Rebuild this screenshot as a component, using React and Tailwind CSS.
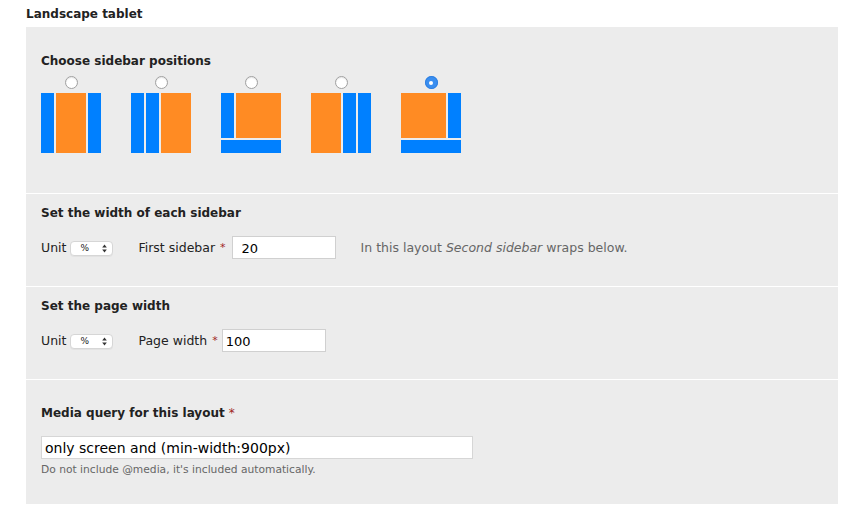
const BLUE = 'bg-[#0080ff]'
const ORANGE = 'bg-[#ff8b23]'

function Radio({ checked }) {
  if (checked) {
    return (
      <span className="flex h-[13px] w-[13px] items-center justify-center rounded-full bg-[#3a8ef0] shadow-[inset_0_0_0_1px_#2f7fe0]">
        <span className="h-[4px] w-[4px] rounded-full bg-white" />
      </span>
    )
  }
  return (
    <span className="block h-[13px] w-[13px] rounded-full border border-[#a0a0a0] bg-white shadow-[inset_0_1px_1px_rgba(0,0,0,0.1)]" />
  )
}

function LayoutIcon({ kind }) {
  if (kind === 'both') {
    return (
      <div className="flex h-[60px] w-[60px] gap-[2px]">
        <div className={`w-[13px] ${BLUE}`} />
        <div className={`flex-1 ${ORANGE}`} />
        <div className={`w-[13px] ${BLUE}`} />
      </div>
    )
  }
  if (kind === 'left') {
    return (
      <div className="flex h-[60px] w-[60px] gap-[2px]">
        <div className={`w-[13px] ${BLUE}`} />
        <div className={`w-[13px] ${BLUE}`} />
        <div className={`flex-1 ${ORANGE}`} />
      </div>
    )
  }
  if (kind === 'right') {
    return (
      <div className="flex h-[60px] w-[60px] gap-[2px]">
        <div className={`flex-1 ${ORANGE}`} />
        <div className={`w-[13px] ${BLUE}`} />
        <div className={`w-[13px] ${BLUE}`} />
      </div>
    )
  }
  if (kind === 'leftwrap') {
    return (
      <div className="flex h-[60px] w-[60px] flex-col gap-[2px]">
        <div className="flex flex-1 gap-[2px]">
          <div className={`w-[13px] ${BLUE}`} />
          <div className={`flex-1 ${ORANGE}`} />
        </div>
        <div className={`h-[13px] ${BLUE}`} />
      </div>
    )
  }
  return (
    <div className="flex h-[60px] w-[60px] flex-col gap-[2px]">
      <div className="flex flex-1 gap-[2px]">
        <div className={`flex-1 ${ORANGE}`} />
        <div className={`w-[13px] ${BLUE}`} />
      </div>
      <div className={`h-[13px] ${BLUE}`} />
    </div>
  )
}

function UnitSelect() {
  return (
    <div className="flex h-[15px] w-[43px] items-center justify-between rounded-[4px] border border-[#d6d6d6] bg-white pl-[9px] pr-[5px] shadow-[0_1px_0_rgba(0,0,0,0.04)]">
      <span className="text-[9px] leading-none text-[#222]">%</span>
      <svg width="5" height="9" viewBox="0 0 5 9">
        <path d="M2.5 0.5 L4.8 3.6 L0.2 3.6 Z" fill="#333" />
        <path d="M2.5 8.5 L4.8 5.4 L0.2 5.4 Z" fill="#333" />
      </svg>
    </div>
  )
}

function Required() {
  return <span className="ml-[5px] pt-[1px] text-[11px] text-[#a02424]">*</span>
}

export default function App() {
  const options = ['both', 'left', 'leftwrap', 'right', 'rightwrap']

  return (
    <div
      className="h-[517px] w-[866px] overflow-hidden bg-white text-[#222]"
      style={{ fontFamily: '"DejaVu Sans", Verdana, sans-serif' }}
    >
      <div className="h-[27px] pl-[26px] pt-[6px] text-[12px] font-bold leading-[16px]">
        Landscape tablet
      </div>

      <div className="ml-[26px] w-[812px] bg-[#ececec]">
        <div className="h-[167px] border-b border-white pl-[15px] pt-[26px]">
          <div className="text-[12px] font-bold leading-[16px]">Choose sidebar positions</div>
          <div className="mt-[7px] flex gap-[30px]">
            {options.map((o, i) => (
              <div key={o} className="flex w-[60px] flex-col items-center gap-[4px]">
                <Radio checked={i === 4} />
                <LayoutIcon kind={o} />
              </div>
            ))}
          </div>
        </div>

        <div className="h-[93px] border-b border-white pl-[15px] pt-[11px]">
          <div className="text-[12px] font-bold leading-[16px]">Set the width of each sidebar</div>
          <div className="mt-[15px] flex h-[23px] items-center text-[12.5px]">
            <span className="pt-[2px]">Unit</span>
            <span className="ml-[4px] pt-[1px]">
              <UnitSelect />
            </span>
            <span className="ml-[25px] pt-[2px]">First sidebar</span>
            <Required />
            <input
              className="ml-[6px] h-[23px] w-[104px] border border-[#d0d0d0] bg-white px-[9px] pt-[2px] text-[13px] text-black outline-none"
              defaultValue="20"
            />
            <span className="ml-[25px] pt-[2px] text-[#666]">
              In this layout <em>Second sidebar</em> wraps below.
            </span>
          </div>
        </div>

        <div className="h-[93px] border-b border-white pl-[15px] pt-[11px]">
          <div className="text-[12px] font-bold leading-[16px]">Set the page width</div>
          <div className="mt-[15px] flex h-[23px] items-center text-[12.5px]">
            <span className="pt-[2px]">Unit</span>
            <span className="ml-[4px] pt-[1px]">
              <UnitSelect />
            </span>
            <span className="ml-[25px] pt-[2px]">Page width</span>
            <Required />
            <input
              className="ml-[4px] h-[23px] w-[104px] border border-[#d0d0d0] bg-white px-[3px] pt-[2px] text-[13px] text-black outline-none"
              defaultValue="100"
            />
          </div>
        </div>

        <div className="h-[124px] pl-[15px] pt-[25px]">
          <div className="text-[12px] font-bold leading-[16px]">
            Media query for this layout
            <span className="ml-[4px] font-normal text-[#a02424]">*</span>
          </div>
          <input
            className="mt-[15px] block h-[23px] w-[432px] border border-[#d6d6d6] bg-white px-[3px] pt-[1px] text-[14px] text-black outline-none"
            defaultValue="only screen and (min-width:900px)"
          />
          <div className="mt-[5px] text-[10.7px] leading-[12px] text-[#666]">
            Do not include @media, it's included automatically.
          </div>
        </div>
      </div>
    </div>
  )
}
